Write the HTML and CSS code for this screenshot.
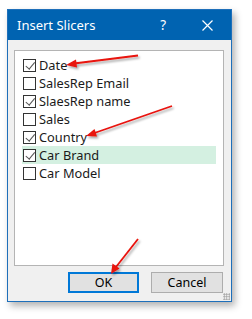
FILE: index.html
```html
<!DOCTYPE html>
<html lang="en">
<head>
    <meta charset="UTF-8">
    <title>Insert Slicers</title>
    <link rel="stylesheet" href="styles.css">
</head>
<body>
    <div class="dialog">
        <div class="titulo">
            <span class="titulo-texto">Insert Slicers</span>
            <span class="ajuda">?</span>
            <svg class="fechar" width="11" height="11" viewBox="0 0 11 11">
                <path d="M0.5 0.5 L10.5 10.5 M10.5 0.5 L0.5 10.5" stroke="#fff" stroke-width="1.2"/>
            </svg>
        </div>
        <div class="corpo">
            <div class="lista">
                <div class="item"><span class="caixa marcada"></span>Date</div>
                <div class="item"><span class="caixa"></span>SalesRep Email</div>
                <div class="item"><span class="caixa marcada"></span>SlaesRep name</div>
                <div class="item"><span class="caixa"></span>Sales</div>
                <div class="item"><span class="caixa marcada"></span>Country</div>
                <div class="item ativo"><span class="caixa marcada"></span>Car Brand</div>
                <div class="item"><span class="caixa"></span>Car Model</div>
            </div>
            <div class="botoes">
                <button class="botao principal">OK</button>
                <button class="botao">Cancel</button>
            </div>
            <span class="grip"></span>
        </div>
    </div>

    <!-- setas vermelhas por cima do dialogo -->
    <svg class="setas" width="252" height="319" viewBox="0 0 252 319">
        <defs>
            <filter id="sombra" x="-20%" y="-20%" width="140%" height="140%">
                <feDropShadow dx="1.5" dy="2" stdDeviation="1.2" flood-color="#000" flood-opacity="0.35"/>
            </filter>
        </defs>
        <g filter="url(#sombra)" fill="#e8120c" stroke="#e8120c">
            <path d="M138 55.5 L74 63.5" stroke-width="1.8" fill="none"/>
            <polygon points="66,65 76,59.5 77,67.5" stroke="none"/>
            <path d="M172 106 L93 133.5" stroke-width="1.8" fill="none"/>
            <polygon points="86,136 94.5,129 97,136.5" stroke="none"/>
            <path d="M138 239 L116 267" stroke-width="1.8" fill="none"/>
            <polygon points="111,274 112.5,263.5 119.5,268.5" stroke="none"/>
        </g>
    </svg>
</body>
</html>
```

FILE: styles.css
```css
* {
    margin: 0;
    padding: 0;
    box-sizing: border-box;
}

body {
    font-family: "Noto Sans", "Open Sans", sans-serif;
    font-size: 12px;
    background-color: #fff;
    width: 252px;
    height: 319px;
    overflow: hidden;
    position: relative;
}

.dialog {
    margin: 9px 0 0 7px;
    width: 225px;
    height: 293px;
    border: 1px solid #1e6fba;
    background-color: #f0f0f0;
    box-shadow: 3px 4px 7px rgba(0, 0, 0, 0.3);
    display: flex;
    flex-direction: column;
}

.titulo {
    height: 30px;
    background-color: #0063b1;
    color: #fff;
    display: flex;
    align-items: center;
    padding-left: 9px;
    flex-shrink: 0;
}

.titulo-texto {
    font-size: 13px;
    flex: 1;
}

.ajuda {
    font-size: 13.5px;
    margin-right: 36px;
}

.fechar {
    margin-right: 18px;
}

.corpo {
    flex: 1;
    position: relative;
    padding: 10px 7px 0 6px;
    display: flex;
    flex-direction: column;
}

.lista {
    height: 216px;
    background-color: #fff;
    border: 1px solid #b4b4b4;
    padding: 5px 7px 0 7px;
}

.item {
    height: 18px;
    display: flex;
    align-items: center;
    padding-left: 1px;
    font-size: 12.8px;
    color: #1a1a1a;
    white-space: nowrap;
}

.item.ativo {
    background-color: #d4f0e1;
}

.caixa {
    width: 13px;
    height: 13px;
    border: 1px solid #333;
    background-color: #fff;
    margin-right: 3px;
    flex-shrink: 0;
    position: relative;
}

.caixa.marcada::after {
    content: "";
    position: absolute;
    left: 3.5px;
    top: 0.5px;
    width: 3.5px;
    height: 7.5px;
    border-right: 1.2px solid #555;
    border-bottom: 1.2px solid #555;
    transform: rotate(40deg);
}

.botoes {
    display: flex;
    justify-content: flex-end;
    gap: 12px;
    margin-top: 6px;
    padding-right: 1px;
}

.botao {
    width: 72px;
    height: 21px;
    font-family: inherit;
    font-size: 12.5px;
    color: #000;
    background-color: #e1e1e1;
    border: 1px solid #adadad;
}

.botao.principal {
    border: 2px solid #0078d7;
    width: 71px;
}

.grip {
    position: absolute;
    right: 1px;
    bottom: 1px;
    width: 7px;
    height: 7px;
    background-image: radial-gradient(circle, #a0a0a0 0.8px, transparent 1px);
    background-size: 2.5px 2.5px;
}

.setas {
    position: absolute;
    left: 0;
    top: 0;
    pointer-events: none;
}
```
